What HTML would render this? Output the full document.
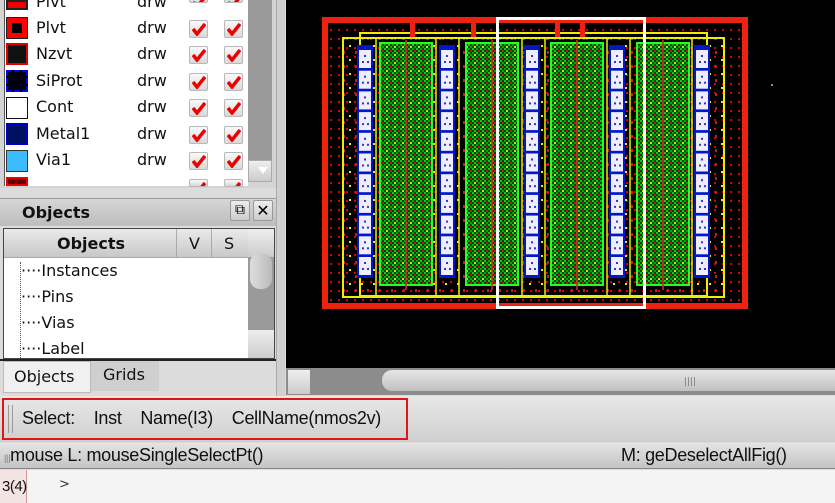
<!DOCTYPE html><html><head><style>
*{margin:0;padding:0;box-sizing:border-box}
body{width:835px;height:503px;overflow:hidden;background:#dcdcdc;font-family:"DejaVu Sans","Liberation Sans",sans-serif;position:relative}
.a{position:absolute}
.cb{position:absolute;width:19px;height:18px;background:linear-gradient(#fafafa,#d8d8d8);border:1px solid #b8b8b8;border-radius:2px}
.cb svg{position:absolute;left:2px;top:2px}
.t{position:absolute;font-size:16px;color:#111;white-space:nowrap}
.s{font-family:"Liberation Sans",sans-serif;font-size:18px;letter-spacing:-0.3px}
</style></head><body>
<div class="a" style="left:0;top:0;width:276px;height:188px;background:#d4d4d4"></div>
<div class="a" style="left:4px;top:0;width:244px;height:186px;background:#fff;border-left:1px solid #555"></div>
<div class="a" style="left:248px;top:0;width:24px;height:160px;background:#9a9a9a"></div>
<div class="a" style="left:248px;top:160px;width:24px;height:22px;background:linear-gradient(#eee,#ccc);border:1px solid #aaa"></div>
<div class="a" style="left:258px;top:167px;width:0;height:0;border-left:5px solid transparent;border-right:5px solid transparent;border-top:7px solid #fff"></div>
<div class="a" style="left:276px;top:0;width:9px;height:396px;background:#d0d0d0;border-left:1px solid #aaa"></div>

<div class="a" style="left:6px;top:0;width:22px;height:10px;background:#e00;border:2px solid #222"></div>
<div class="a" style="left:6px;top:17px;width:22px;height:22px;background:#f00;border:1px solid #222"><div class="a" style="left:5px;top:5px;width:10px;height:10px;background:#000"></div></div>
<div class="a" style="left:6px;top:43px;width:22px;height:22px;background:#111;border:2px solid #d00"></div>
<div class="a" style="left:6px;top:70px;width:22px;height:22px;background:#001;border:2px dashed #00f"></div>
<div class="a" style="left:6px;top:97px;width:22px;height:22px;background:#fff;border:1px solid #111"></div>
<div class="a" style="left:6px;top:123px;width:22px;height:22px;background:#001060;border:2px solid #00c"></div>
<div class="a" style="left:6px;top:150px;width:22px;height:22px;background:#3bbcff;border:1px solid #333"></div>
<div class="a" style="left:6px;top:177px;width:22px;height:9px;background:#600;border:2px solid #e00"></div>
<div class="t" style="left:36px;top:-8px">Plvt</div><div class="t" style="left:137px;top:-8px">drw</div>
<div class="t" style="left:36px;top:18px">Plvt</div><div class="t" style="left:137px;top:18px">drw</div>
<div class="t" style="left:36px;top:44px">Nzvt</div><div class="t" style="left:137px;top:44px">drw</div>
<div class="t" style="left:36px;top:71px">SiProt</div><div class="t" style="left:137px;top:71px">drw</div>
<div class="t" style="left:36px;top:97px">Cont</div><div class="t" style="left:137px;top:97px">drw</div>
<div class="t" style="left:36px;top:124px">Metal1</div><div class="t" style="left:137px;top:124px">drw</div>
<div class="t" style="left:36px;top:150px">Via1</div><div class="t" style="left:137px;top:150px">drw</div>
<div id="cbs"></div>

<div class="a" style="left:0;top:198px;width:276px;height:28px;background:linear-gradient(#d6d6d6,#bdbdbd);border-top:1px solid #999"></div>
<div class="t" style="left:22px;top:203px;font-weight:bold;font-size:16px">Objects</div>
<div class="a" style="left:230px;top:200px;width:20px;height:21px;background:linear-gradient(#eee,#ccc);border:1px solid #999;border-radius:2px;font-size:14px;text-align:center;line-height:19px">⧉</div>
<div class="a" style="left:253px;top:200px;width:20px;height:21px;background:linear-gradient(#eee,#ccc);border:1px solid #999;border-radius:2px;font-size:16px;font-weight:bold;text-align:center;line-height:19px">✕</div>
<div class="a" style="left:3px;top:228px;width:272px;height:131px;background:#fff;border:1px solid #444"></div>
<div class="a" style="left:4px;top:229px;width:244px;height:29px;background:linear-gradient(#eaeaea,#c8c8c8);border-bottom:1px solid #aaa"></div>
<div class="a" style="left:176px;top:229px;width:1px;height:29px;background:#aaa"></div>
<div class="a" style="left:211px;top:229px;width:1px;height:29px;background:#aaa"></div>
<div class="t" style="left:57px;top:234px;font-weight:bold">Objects</div>
<div class="t" style="left:189px;top:234px">V</div><div class="t" style="left:224px;top:234px">S</div>
<div class="a" style="left:248px;top:229px;width:26px;height:129px;background:#9a9a9a"></div>
<div class="a" style="left:248px;top:229px;width:26px;height:28px;background:linear-gradient(#eee,#ccc)"></div>
<div class="a" style="left:248px;top:330px;width:26px;height:28px;background:linear-gradient(#eee,#ccc)"></div>
<div class="a" style="left:250px;top:253px;width:22px;height:36px;background:linear-gradient(90deg,#ddd,#bbb);border-radius:10px"></div>
<div class="a" style="left:20px;top:262px;width:0;height:96px;border-left:1px dotted #555"></div>
<div class="t" style="left:21px;top:261px">····Instances</div>
<div class="t" style="left:21px;top:287px">····Pins</div>
<div class="t" style="left:21px;top:313px">····Vias</div>
<div class="t" style="left:21px;top:339px;height:18px;overflow:hidden">····Label</div>
<div class="a" style="left:0;top:359px;width:276px;height:2px;background:#222"></div>
<div class="a" style="left:3px;top:361px;width:88px;height:32px;background:#f0f0f0;border:1px solid #bbb"></div>
<div class="a" style="left:91px;top:361px;width:68px;height:30px;background:#cfcfcf"></div>
<div class="t" style="left:14px;top:367px">Objects</div><div class="t" style="left:103px;top:365px">Grids</div>

<div class="a" style="left:286px;top:0;width:549px;height:368px;background:#000"></div>
<svg class="a" style="left:0;top:0" width="835" height="368">
<defs>
<pattern id="dots" width="8" height="9" patternUnits="userSpaceOnUse"><rect x="2" y="2" width="2" height="2" fill="#d00"/></pattern>
<pattern id="grn" width="8" height="8" patternUnits="userSpaceOnUse"><rect width="8" height="8" fill="#041"/><rect width="2" height="2" fill="#1c1"/><rect x="4" y="0" width="2" height="2" fill="#0a0"/><rect x="2" y="2" width="2" height="2" fill="#1b1"/><rect x="6" y="2" width="2" height="2" fill="#c11"/><rect x="0" y="4" width="2" height="2" fill="#0a0"/><rect x="4" y="4" width="2" height="2" fill="#1c1"/><rect x="2" y="6" width="2" height="2" fill="#dd0"/><rect x="6" y="6" width="2" height="2" fill="#0a0"/></pattern>
<pattern id="ys" width="12" height="14" patternUnits="userSpaceOnUse"><rect x="1" y="3" width="2" height="2" fill="#ee0"/><rect x="7" y="9" width="2" height="3" fill="#d11"/></pattern>
</defs>
<rect x="322" y="17" width="426" height="292" fill="url(#dots)"/>
<rect x="343" y="38" width="381" height="259" fill="url(#ys)"/>
<g fill="url(#grn)" stroke="#2f2" stroke-width="2">
<rect x="380" y="43" width="52" height="242"/><rect x="466" y="43" width="52" height="242"/><rect x="551" y="43" width="52" height="242"/><rect x="637" y="43" width="52" height="242"/></g>
<g stroke="#d22" stroke-width="2" opacity=".8"><line x1="406" y1="40" x2="406" y2="290"/><line x1="492" y1="40" x2="492" y2="290"/><line x1="577" y1="40" x2="577" y2="290"/><line x1="663" y1="40" x2="663" y2="290"/></g>
<g fill="none" stroke="#ee0" stroke-width="2"><rect x="343" y="38" width="381" height="259"/><rect x="360" y="33" width="347" height="263"/></g>
<g stroke="#ee0" stroke-width="1.5"><line x1="376" y1="38" x2="376" y2="297"/><line x1="436" y1="38" x2="436" y2="297"/><line x1="459" y1="38" x2="459" y2="297"/><line x1="522" y1="38" x2="522" y2="297"/><line x1="545" y1="38" x2="545" y2="297"/><line x1="607" y1="38" x2="607" y2="297"/><line x1="630" y1="38" x2="630" y2="297"/><line x1="692" y1="38" x2="692" y2="297"/></g>
<g id="cont"></g>
<rect x="325" y="20" width="420" height="286" fill="none" stroke="#e21" stroke-width="6"/>
<g fill="#e21"><rect x="410" y="17" width="5" height="20"/><rect x="471" y="17" width="5" height="20"/><rect x="555" y="17" width="5" height="20"/><rect x="580" y="17" width="5" height="20"/></g>
<rect x="497.5" y="18.5" width="147" height="289" fill="none" stroke="#fff" stroke-width="3"/>
<rect x="771" y="84" width="2" height="2" fill="#88a"/>
</svg>
<div class="a" style="left:286px;top:368px;width:549px;height:27px;background:#8c8c8c"></div>
<div class="a" style="left:288px;top:370px;width:22px;height:24px;background:linear-gradient(#eee,#ccc)"></div>
<div class="a" style="left:382px;top:370px;width:453px;height:21px;background:linear-gradient(#e6e6e6,#c0c0c0);border-radius:10px 0 0 10px"></div>
<div class="a" style="left:684px;top:377px;font-size:9px;color:#777">||||</div>

<div class="a" style="left:0;top:396px;width:835px;height:46px;background:linear-gradient(#e8e8e8,#cfcfcf)"></div>
<div class="a" style="left:2px;top:398px;width:406px;height:42px;border:2px solid #e01515"></div>
<div class="a" style="left:8px;top:405px;width:5px;height:28px;border-left:1px solid #999;border-right:1px solid #999"></div>
<div class="t s" style="left:22px;top:408px">Select:&nbsp;&nbsp;&nbsp;&nbsp;Inst&nbsp;&nbsp;&nbsp;&nbsp;Name(I3)&nbsp;&nbsp;&nbsp;&nbsp;CellName(nmos2v)</div>
<div class="a" style="left:0;top:443px;width:835px;height:26px;background:linear-gradient(#e4e4e4,#c4c4c4);border-bottom:1px solid #888"></div>
<div class="t s" style="left:4px;top:445px"><span style="font-size:9px;color:#777">|||</span>mouse L: mouseSingleSelectPt()</div>
<div class="t s" style="left:621px;top:445px">M: geDeselectAllFig()</div>
<div class="a" style="left:0;top:470px;width:835px;height:33px;background:#f4f4f4"></div>
<div class="a" style="left:0;top:470px;width:27px;height:33px;background:#f3e4e4;border-right:1px solid #c99"></div>
<div class="t" style="left:2px;top:478px;font-size:15px;font-family:'Liberation Sans',sans-serif;letter-spacing:-0.5px">3(4)</div>
<div class="t" style="left:59px;top:477px;font-size:13px;color:#333">&gt;</div>
<script>
var ck='<svg width="14" height="13"><path d="M1 6 L5 11 L13 1" stroke="#e00" stroke-width="3.5" fill="none"/></svg>';
var h='';[-8,19,45,72,98,125,151,178,261,287,313,339].forEach(function(y){var hh=(y<0)?10:(y>175&&y<200)?8:(y==339?17:18);h+='<div class="cb" style="left:189px;top:'+(y+1)+'px;height:'+hh+'px;overflow:hidden">'+ck+'</div><div class="cb" style="left:224px;top:'+(y+1)+'px;height:'+hh+'px;overflow:hidden">'+ck+'</div>';});
document.getElementById('cbs').innerHTML=h;
var c='';[359,441,526,611,696].forEach(function(x){c+='<rect x="'+(x-2)+'" y="45" width="16" height="233" fill="#0018c8"/>';for(var y=50;y<272;y+=20.7){c+='<rect x="'+(x)+'" y="'+y+'" width="12" height="18" fill="#eef"/><rect x="'+(x+5)+'" y="'+(y+5)+'" width="2" height="2" fill="#33c"/><rect x="'+(x+3)+'" y="'+(y+11)+'" width="2" height="2" fill="#33c"/><rect x="'+(x+8)+'" y="'+(y+11)+'" width="2" height="2" fill="#33c"/>';}});
document.getElementById('cont').innerHTML=c;
</script>
</body></html>
